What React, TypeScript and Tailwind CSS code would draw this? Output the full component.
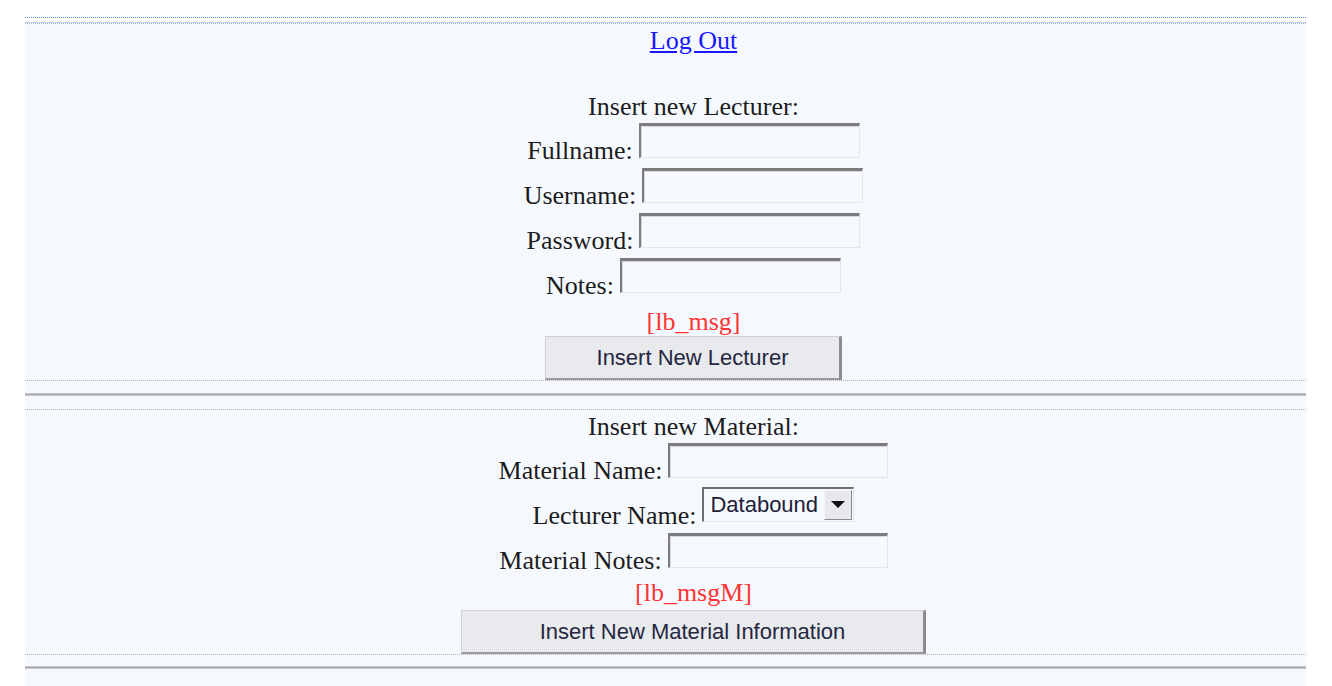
import React from "react";

const serif = { fontFamily: '"Liberation Serif", "Times New Roman", serif' };
const sans = { fontFamily: '"Liberation Sans", Arial, sans-serif' };

function TextBox({ w = 221 }: { w?: number }) {
  return (
    <input
      type="text"
      readOnly
      style={{ width: w }}
      className="h-[35px] bg-[#f6f9fe] border-t-[3px] border-l-[2px] border-b border-r border-t-[#7c7c7c] border-l-[#7c7c7c] border-b-[#e3e7ec] border-r-[#e3e7ec] shadow-[inset_1px_1px_0_#d8d8d8] outline-none"
    />
  );
}

function Row({
  label,
  children,
}: {
  label: string;
  children: React.ReactNode;
}) {
  return (
    <div className="h-[45px] flex items-start justify-center gap-[6px]">
      <span className="mt-[14px] leading-[30px] text-[26px] text-[#1c1c1c]" style={serif}>
        {label}
      </span>
      <div className="mt-[1px]">{children}</div>
    </div>
  );
}

function Select() {
  return (
    <div className="w-[152px] h-[35px] -mt-[1px] flex items-center bg-[#f6f9fe] border-t-[2px] border-l-[2px] border-b border-r border-t-[#6e6e6e] border-l-[#6e6e6e] border-b-[#e3e7ec] border-r-[#e3e7ec]">
      <span className="flex-1 pl-[6px] text-[22px] leading-[28px] text-[#202038]" style={sans}>
        Databound
      </span>
      <div className="w-[28px] h-[30px] mr-[1px] bg-[#e6e8ec] border border-[#f4f4f4] border-r-[#8a8a8a] border-b-[#8a8a8a] flex items-center justify-center">
        <svg width="14" height="8" viewBox="0 0 14 8">
          <path d="M0 0 L14 0 L7 7 Z" fill="#111" />
        </svg>
      </div>
    </div>
  );
}

function Btn({ text, w }: { text: string; w: number }) {
  return (
    <button
      style={{ width: w, ...sans }}
      className="h-[44px] bg-[#e8eaee] border-t border-l border-t-[#d0d0d0] border-l-[#d0d0d0] border-r-[3px] border-b-[2px] border-r-[#8c8c8c] border-b-[#9a9a9a] text-[22px] leading-[28px] text-[#262640] block mx-auto"
    >
      {text}
    </button>
  );
}

function Msg({ text, pt }: { text: string; pt: string }) {
  return (
    <div className={`${pt} text-center`}>
      <span className="text-[26px] leading-[30px] text-[#ff3434]" style={serif}>
        {text}
      </span>
    </div>
  );
}

export default function App() {
  return (
    <div className="min-h-screen bg-white pt-[17px] pl-[25px] pr-[26px]" style={serif}>
      <div className="border-t border-dotted border-[#4f7fd6]" />
      <div className="mt-[4px] bg-[#f5f9fe] border-t border-[#bcd3f2] h-[664px]">
        <div className="border-t border-dotted border-[#b4b4b4]" />
        <div className="pl-[56px]">
          {/* Section 1 */}
          <div className="h-[30px] mt-[2px] text-center">
            <a href="#" className="text-[26px] leading-[30px] text-[#1818ff] underline">
              Log Out
            </a>
          </div>
          <div className="mt-[36px] h-[30px] text-center text-[26px] leading-[30px] text-[#1c1c1c]">
            Insert new Lecturer:
          </div>
          <Row label="Fullname:">
            <TextBox />
          </Row>
          <Row label="Username:">
            <TextBox />
          </Row>
          <Row label="Password:">
            <TextBox />
          </Row>
          <Row label="Notes:">
            <TextBox />
          </Row>
          <div className="h-[34px]">
            <Msg text="[lb_msg]" pt="pt-[5px]" />
          </div>
          <Btn text="Insert New Lecturer" w={297} />
        </div>
        <div className="border-t border-dotted border-[#b4b4b4]" />
        <div className="mt-[12px] h-[3px] bg-[#a6a6a6] border-t border-b border-t-[#c8c8c8] border-b-[#c8c8c8]" />
        <div className="mt-[13px] border-t border-dotted border-[#b4b4b4]" />
        <div className="pl-[56px]">
          {/* Section 2 */}
          <div className="mt-[2px] h-[30px] text-center text-[26px] leading-[30px] text-[#1c1c1c]">
            Insert new Material:
          </div>
          <Row label="Material Name:">
            <TextBox w={220} />
          </Row>
          <Row label="Lecturer Name:">
            <Select />
          </Row>
          <Row label="Material Notes:">
            <TextBox w={220} />
          </Row>
          <div className="h-[33px]">
            <Msg text="[lb_msgM]" pt="pt-[1px]" />
          </div>
          <Btn text="Insert New Material Information" w={465} />
        </div>
        <div className="border-t border-dotted border-[#b4b4b4]" />
        <div className="mt-[11px] h-[3px] bg-[#a6a6a6] border-t border-b border-t-[#c8c8c8] border-b-[#c8c8c8]" />
      </div>
    </div>
  );
}
